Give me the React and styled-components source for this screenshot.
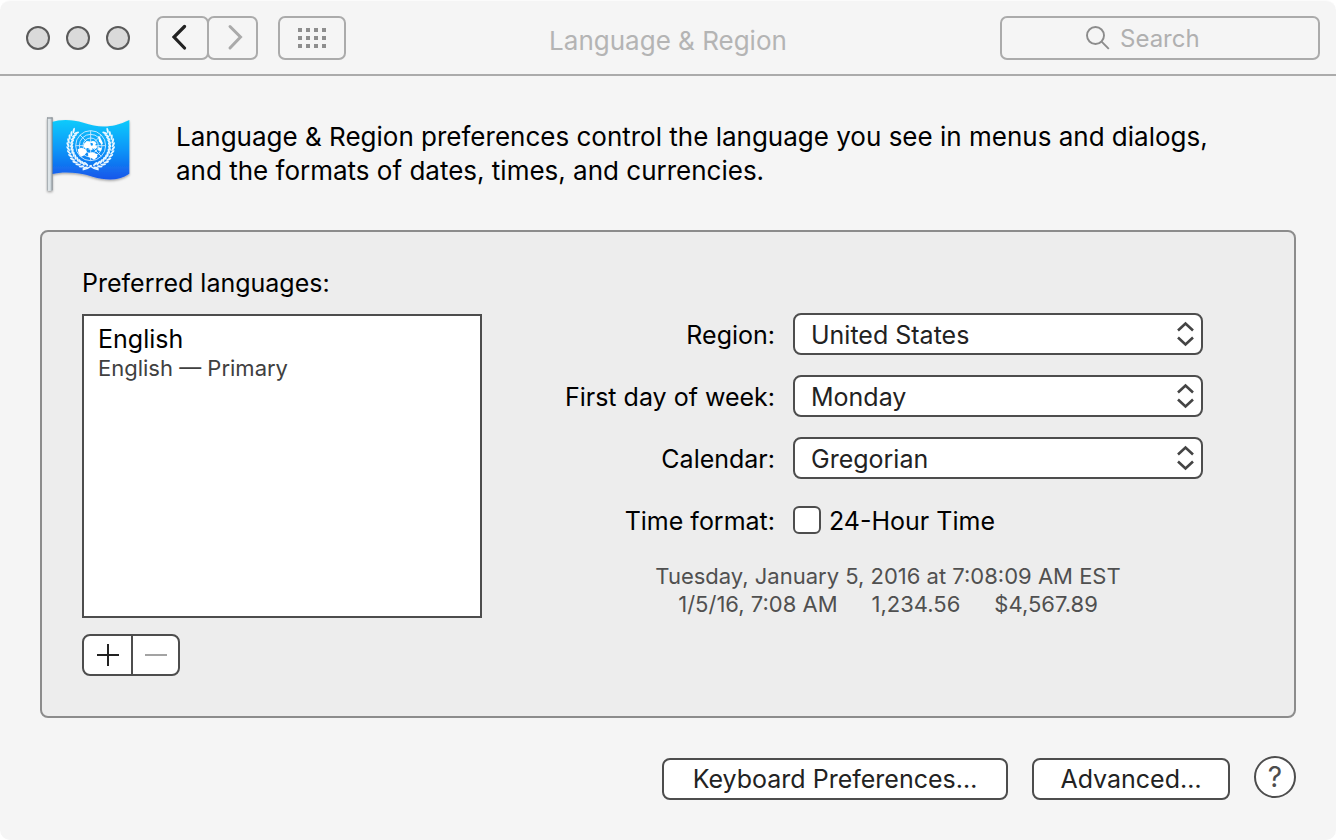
import React from "react";
import styled, { createGlobalStyle } from "styled-components";

const ink = "#4d4d4d";
const barLine = "#ababab";

const Global = createGlobalStyle`
  *, *::before, *::after { box-sizing: border-box; }
  body {
    margin: 0;
    background: #fff;
    font-family: Inter, "Liberation Sans", sans-serif;
    font-size: 25px;
    line-height: 34px;
    color: #000;
  }
  button, input, select { font: inherit; margin: 0; padding: 0; }
  svg { display: block; flex: none; }
`;

const Window = styled.div`
  display: flex;
  flex-direction: column;
  min-height: 100vh;
  background: #f5f5f5;
  border-top: 1px solid #fbfbfb;
  border-radius: 10px;
`;

const Toolbar = styled.header`
  display: grid;
  grid-template-columns: 1fr auto 1fr;
  align-items: center;
  padding: 15px 16px 14px;
  border-bottom: 2px solid ${barLine};
`;

const ToolbarStart = styled.div`
  display: flex;
  align-items: center;
  gap: 20px;
`;

const WindowControls = styled.div`
  display: flex;
  gap: 16px;
  padding: 0 6px 0 10px;
`;

const Light = styled.button`
  width: 24px;
  height: 24px;
  border: 2px solid #5a5a5a;
  border-radius: 50%;
  background: #dadada;
`;

const NavGroup = styled.div`
  display: flex;
`;

const BarButton = styled.button`
  display: flex;
  align-items: center;
  justify-content: center;
  width: ${(p) => p.$width}px;
  height: 44px;
  border: 2px solid ${barLine};
  border-radius: 7px;
  background: transparent;
  & + & { margin-left: -2px; }
`;

const Title = styled.h1`
  margin: 6px 0 0;
  font-size: 26px;
  font-weight: 400;
  line-height: 34px;
  color: #b4b4b4;
`;

const SearchField = styled.label`
  justify-self: end;
  display: flex;
  align-items: center;
  gap: 10px;
  width: 320px;
  height: 44px;
  padding-left: 84px;
  border: 2px solid ${barLine};
  border-radius: 7px;
`;

const SearchInput = styled.input`
  flex: 1;
  min-width: 0;
  padding-top: 2px;
  border: 0;
  outline: 0;
  background: transparent;
  color: #333;
  font-size: 24px;
  &::placeholder { color: #b0b0b0; opacity: 1; }
`;

const Main = styled.main`
  padding: 36px 40px 40px;
`;

const Intro = styled.section`
  display: flex;
  align-items: flex-start;
  gap: 42px;
  padding: 0 2px;
  margin-bottom: 34px;
`;

const IntroText = styled.p`
  max-width: 1060px;
  margin: 8px 0 0;
  font-size: 26px;
`;

const Panel = styled.section`
  display: flex;
  padding: 34px 0 40px 40px;
  border: 2px solid #8c8c8c;
  border-radius: 8px;
  background: #ededed;
`;

const Languages = styled.div`
  flex: none;
  width: 400px;
`;

const Heading = styled.h2`
  margin: 0 0 14px;
  font-size: 25px;
  font-weight: 400;
  line-height: 34px;
`;

const LanguageList = styled.ul`
  height: 304px;
  margin: 0 0 16px;
  padding: 6px 14px;
  border: 2px solid ${ink};
  background: #fff;
  list-style: none;
`;

const LanguageName = styled.div`
  line-height: 34px;
`;

const LanguageNote = styled.div`
  font-size: 22px;
  line-height: 24px;
  color: #404040;
`;

const ListActions = styled.div`
  display: inline-flex;
  border: 2px solid ${ink};
  border-radius: 8px;
  background: #fff;
`;

const ListAction = styled.button`
  display: flex;
  align-items: center;
  justify-content: center;
  width: 47px;
  height: 38px;
  border: 0;
  background: transparent;
  & + & { border-left: 2px solid ${ink}; }
`;

const Formats = styled.div`
  flex: 1;
  min-width: 0;
  padding-top: 47px;
`;

const FormGrid = styled.form`
  display: grid;
  grid-template-columns: 1fr minmax(0, 410px);
  column-gap: 18px;
  row-gap: 20px;
  align-items: center;
  padding-right: 91px;
`;

const FieldLabel = styled.label`
  padding-top: 2px;
  text-align: right;
`;

const SelectBox = styled.div`
  position: relative;
`;

const Select = styled.select`
  display: block;
  width: 100%;
  height: 42px;
  padding: 2px 40px 0 16px;
  border: 2px solid ${ink};
  border-radius: 8px;
  background: #fff;
  color: #222;
  appearance: none;
`;

const SelectArrows = styled.svg`
  position: absolute;
  top: 8px;
  right: 9px;
  pointer-events: none;
`;

const CheckRow = styled.div`
  display: flex;
  align-items: center;
  gap: 8px;
  height: 42px;
`;

const CheckLabel = styled.label`
  padding-top: 2px;
`;

const Checkbox = styled.input`
  width: 28px;
  height: 28px;
  border: 2px solid ${ink};
  border-radius: 6px;
  background: #fff;
  appearance: none;
  &:checked { background: ${ink}; }
`;

const Samples = styled.div`
  margin-top: 21px;
  font-size: 22px;
  line-height: 28px;
  text-align: center;
  color: #505050;
`;

const SampleRow = styled.div`
  display: flex;
  justify-content: center;
  gap: 34px;
`;

const Footer = styled.footer`
  display: flex;
  justify-content: flex-end;
  gap: 24px;
  margin-top: 38px;
`;

const PushButton = styled.button`
  min-width: ${(p) => p.$width}px;
  height: 42px;
  margin-top: 2px;
  padding: 0 20px;
  border: 2px solid ${ink};
  border-radius: 8px;
  background: #fff;
  color: #222;
`;

const HelpButton = styled.button`
  width: 42px;
  height: 42px;
  border: 2px solid ${ink};
  border-radius: 50%;
  background: #fff;
  color: ${ink};
  font-size: 28px;
  line-height: 38px;
`;

const CX = 182;
const CY = 137;

function laurel(side) {
  const leaves = [];
  for (let i = 0; i < 13; i++) {
    const deg = 104 + i * 9.8;
    const a = (deg * Math.PI) / 180;
    [57, 68].forEach((r, k) => {
      const x = CX + side * Math.cos(a) * r;
      const y = CY + Math.sin(a) * r;
      const tilt = deg + 90 + (k ? -28 : 28);
      leaves.push(
        <ellipse
          key={`${i}-${k}`}
          cx={x}
          cy={y}
          rx="8.5"
          ry="3.1"
          transform={`rotate(${side === 1 ? tilt : 180 - tilt} ${x} ${y})`}
        />
      );
    });
  }
  return leaves;
}

function FlagIcon() {
  const flag =
    "M65 66 C92 57 128 58 160 68 C205 83 245 86 298 60 L298 221 C264 244 228 241 188 230 C145 217 100 214 65 223 Z";
  return (
    <svg width="92" height="84" viewBox="36 36 276 252" aria-hidden="true">
      <defs>
        <linearGradient id="cloth" x1="0" y1="0" x2="0" y2="1">
          <stop offset="0" stopColor="#0bcbfc" />
          <stop offset="0.5" stopColor="#0c95f8" />
          <stop offset="1" stopColor="#1656ea" />
        </linearGradient>
        <linearGradient id="pole" x1="0" y1="0" x2="1" y2="0">
          <stop offset="0" stopColor="#8f979c" />
          <stop offset="0.3" stopColor="#e8eef1" />
          <stop offset="0.65" stopColor="#cbd4d9" />
          <stop offset="1" stopColor="#7b8389" />
        </linearGradient>
        <filter id="shade" x="-10%" y="-10%" width="120%" height="125%">
          <feDropShadow dx="0" dy="4" stdDeviation="3" floodColor="#000" floodOpacity="0.35" />
        </filter>
      </defs>
      <g filter="url(#shade)">
        <path d={flag} fill="url(#cloth)" />
        <rect x="51" y="52" width="17" height="220" rx="2" fill="url(#pole)" />
      </g>
      <rect x="51" y="52" width="17" height="4" fill="#92999e" />
      <g fill="none" stroke="#d9efff" strokeWidth="2.6">
        <circle cx={CX} cy={CY} r="12" />
        <circle cx={CX} cy={CY} r="23" />
        <circle cx={CX} cy={CY} r="34" />
        <circle cx={CX} cy={CY} r="45" />
        <path d={`M${CX} 92V182M137 ${CY}H227M150 105L214 169M214 105L150 169`} />
      </g>
      <g fill="#fff">
        <path d="M163 129l10-6 9 3 7-4 11 7-5 7 8 4-6 7-9-3-4 7-8-6-8 3-7-8z" />
        <path d="M143 148l11-5 13 5 4 8-8 10-9 4-8-9z" />
        <path d="M174 160l13-3 14 5 1 9-10 8-8-5-9-3z" />
        <path d="M204 108l6 3 9 19-4 4-8-10z" />
        <path d="M205 141l10 4-3 9-8-3z" />
        <path d="M181 128l7 2 1 6-6 1z" fill="#0c95f8" />
        <path d="M170 144l6 1-2 5-5-1z" fill="#0c95f8" />
      </g>
      <g fill="#eaf7ff">
        {laurel(1)}
        {laurel(-1)}
      </g>
      <path
        d="M158 209C170 208 178 203 185 196M206 209C194 208 186 203 179 196"
        fill="none"
        stroke="#eaf7ff"
        strokeWidth="4.5"
      />
    </svg>
  );
}

function PopUp({ id, label, value, options }) {
  return (
    <>
      <FieldLabel htmlFor={id}>{label}</FieldLabel>
      <SelectBox>
        <Select id={id} defaultValue={value}>
          {options.map((o) => (
            <option key={o}>{o}</option>
          ))}
        </Select>
        <SelectArrows width="18" height="26" viewBox="0 0 18 26" fill="none" stroke="#444" strokeWidth="2.6">
          <path d="M2 9.5L9.5 2.5L17 9.5M2 16.5L9.5 23.5L17 16.5" />
        </SelectArrows>
      </SelectBox>
    </>
  );
}

export default function App() {
  return (
    <>
      <Global />
      <Window>
        <Toolbar>
          <ToolbarStart>
            <WindowControls>
              <Light aria-label="Close" />
              <Light aria-label="Minimize" />
              <Light aria-label="Zoom" />
            </WindowControls>
            <NavGroup>
              <BarButton $width={53} aria-label="Back">
                <svg width="22" height="28" viewBox="0 0 22 28" fill="none" stroke="#222" strokeWidth="3.2" strokeLinecap="round">
                  <path d="M12.5 2.5L2 13L12.5 24" />
                </svg>
              </BarButton>
              <BarButton $width={51} aria-label="Forward">
                <svg width="22" height="28" viewBox="0 0 22 28" fill="none" stroke="#aaa" strokeWidth="3" strokeLinecap="round">
                  <path d="M8 2.5L18.5 13L8 24" />
                </svg>
              </BarButton>
            </NavGroup>
            <BarButton $width={68} aria-label="Show All">
              <svg width="28" height="20" viewBox="0 0 28 20" fill="#8e8e8e">
                {[0, 8, 16].map((y) =>
                  [0, 8, 16, 24].map((x) => <rect key={`${x}-${y}`} x={x} y={y} width="4" height="4" />)
                )}
              </svg>
            </BarButton>
          </ToolbarStart>
          <Title>Language &amp; Region</Title>
          <SearchField>
            <svg width="24" height="24" viewBox="0 0 24 24" fill="none" stroke="#8c8c8c" strokeWidth="1.9">
              <circle cx="9.5" cy="9.5" r="8.5" />
              <path d="M15.6 15.6L22.8 22.8" />
            </svg>
            <SearchInput type="text" placeholder="Search" aria-label="Search" />
          </SearchField>
        </Toolbar>

        <Main>
          <Intro>
            <FlagIcon />
            <IntroText>
              Language &amp; Region preferences control the language you see in menus and dialogs,
              and the formats of dates, times, and currencies.
            </IntroText>
          </Intro>

          <Panel>
            <Languages>
              <Heading>Preferred languages:</Heading>
              <LanguageList>
                <li>
                  <LanguageName>English</LanguageName>
                  <LanguageNote>English — Primary</LanguageNote>
                </li>
              </LanguageList>
              <ListActions>
                <ListAction aria-label="Add language">
                  <svg width="22" height="22" viewBox="0 0 22 22" stroke="#222" strokeWidth="2">
                    <path d="M0 11H22M11 0V22" />
                  </svg>
                </ListAction>
                <ListAction aria-label="Remove language" disabled>
                  <svg width="22" height="22" viewBox="0 0 22 22" stroke="#a3a3a3" strokeWidth="2">
                    <path d="M0 11H22" />
                  </svg>
                </ListAction>
              </ListActions>
            </Languages>

            <Formats>
              <FormGrid>
                <PopUp id="region" label="Region:" value="United States" options={["United States", "Canada"]} />
                <PopUp id="weekday" label="First day of week:" value="Monday" options={["Sunday", "Monday"]} />
                <PopUp id="calendar" label="Calendar:" value="Gregorian" options={["Gregorian", "Buddhist"]} />
                <FieldLabel as="span">Time format:</FieldLabel>
                <CheckRow>
                  <Checkbox type="checkbox" id="hour24" />
                  <CheckLabel htmlFor="hour24">24-Hour Time</CheckLabel>
                </CheckRow>
              </FormGrid>
              <Samples>
                <div>Tuesday, January 5, 2016 at 7:08:09 AM EST</div>
                <SampleRow>
                  <span>1/5/16, 7:08 AM</span>
                  <span>1,234.56</span>
                  <span>$4,567.89</span>
                </SampleRow>
              </Samples>
            </Formats>
          </Panel>

          <Footer>
            <PushButton $width={346}>Keyboard Preferences…</PushButton>
            <PushButton $width={198}>Advanced…</PushButton>
            <HelpButton aria-label="Help">?</HelpButton>
          </Footer>
        </Main>
      </Window>
    </>
  );
}
